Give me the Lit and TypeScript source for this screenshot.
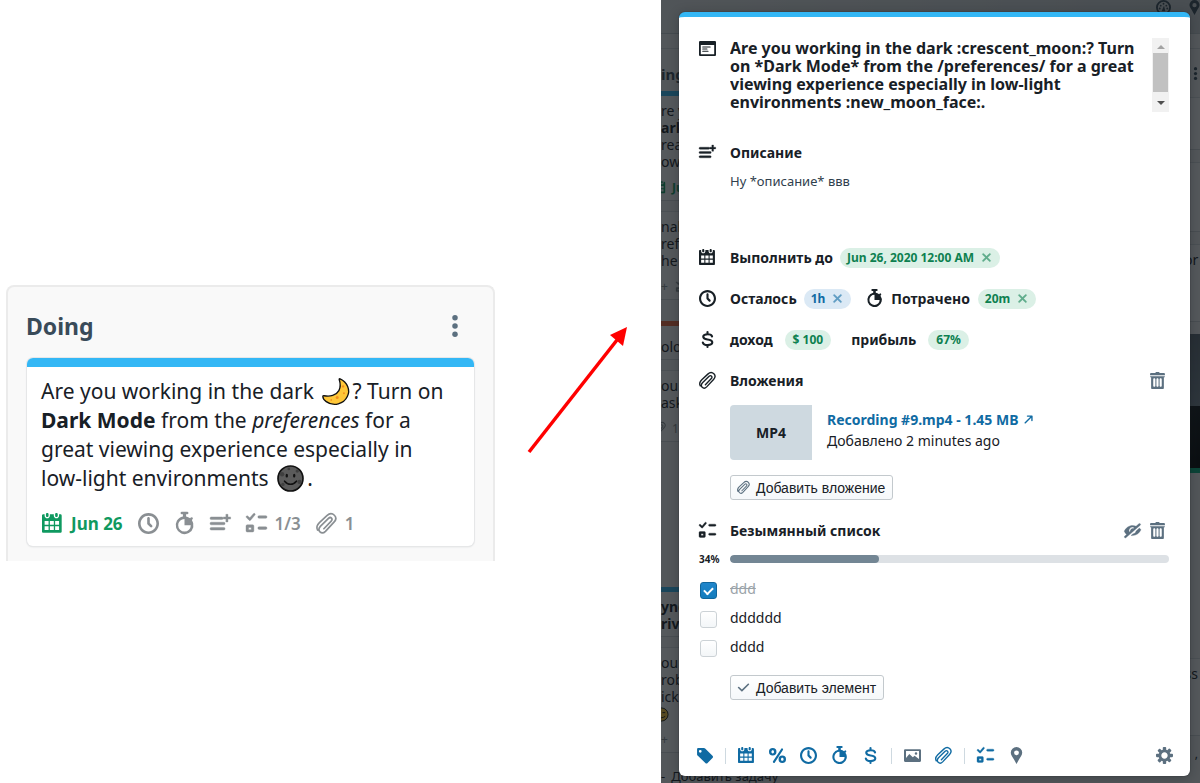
import { LitElement, html, css, svg, nothing } from "lit";
import { customElement, property } from "lit/decorators.js";
import { classMap } from "lit/directives/class-map.js";

const ICONS: Record<string, unknown> = {
  calendar: svg`<path d="M11 3c.6 0 1-.5 1-1V1c0-.6-.4-1-1-1s-1 .4-1 1v1c0 .5.4 1 1 1zm3-2h-1v1c0 1.1-.9 2-2 2s-2-.9-2-2V1H6v1c0 1.1-.9 2-2 2s-2-.9-2-2V1H1c-.6 0-1 .5-1 1v12c0 .6.4 1 1 1h13c.6 0 1-.4 1-1V2c0-.6-.5-1-1-1zM5 13H2v-3h3v3zm0-4H2V6h3v3zm4 4H6v-3h3v3zm0-4H6V6h3v3zm4 4h-3v-3h3v3zm0-4h-3V6h3v3zM4 3c.6 0 1-.5 1-1V1c0-.6-.4-1-1-1S3 .4 3 1v1c0 .5.4 1 1 1z"/>`,
  time: svg`<path d="M8 0C3.58 0 0 3.58 0 8s3.58 8 8 8 8-3.58 8-8-3.58-8-8-8zm0 14c-3.31 0-6-2.69-6-6s2.69-6 6-6 6 2.69 6 6-2.69 6-6 6zm1-6.41V4c0-.55-.45-1-1-1s-1 .45-1 1v4c0 .28.11.53.29.71l2 2a1.003 1.003 0 001.42-1.42L9 7.59z"/>`,
  stopwatch: svg`<path fill-rule="evenodd" d="M6 -1h4a1 1 0 0 1 0 2H9.2v1.6A6.8 6.8 0 0 1 12.3 4l.5-.5a.9.9 0 0 1 1.3 1.3l-.5.5A6.8 6.8 0 1 1 6.8 2.6V1H6a1 1 0 0 1 0-2zM8 4.5a4.8 4.8 0 1 0 4.8 4.8H8z"/>`,
  note: svg`<path d="M1 3h8a1 1 0 0 1 0 2H1a1 1 0 0 1 0-2zm0 4h9.5a1 1 0 0 1 0 2H1a1 1 0 0 1 0-2zm0 4h9.5a1 1 0 0 1 0 2H1a1 1 0 0 1 0-2zM12.1 1h1.6v2h2v1.600h-2v2.200h-1.600v-2.200h-2V3h2z" stroke="currentColor" stroke-width=".3"/>`,
  checklist: svg`<path fill-rule="evenodd" d="M10 2h5a1 1 0 0 1 0 2h-5a1 1 0 0 1 0-2zm0 8.500h5a1 1 0 0 1 0 2h-5a1 1 0 0 1 0-2zM5.600.500a.8.8 0 0 1 1.200 1.100L3.500 5.500a.8.8 0 0 1-1.200 0L.3 3.500a.8.8 0 0 1 1.200-1.100l1.400 1.300zM1 9h4a1 1 0 0 1 1 1v3.500a1 1 0 0 1-1 1H1a1 1 0 0 1-1-1V10a1 1 0 0 1 1-1zm1 2v1.700h2V11z" stroke="currentColor" stroke-width=".3"/>`,
  paperclip: svg`<path fill="none" stroke="currentColor" stroke-width="1.3" stroke-linecap="round" stroke-linejoin="round" d="M2.600 7.300 8.300 2C10.300.1 12.500.2 14 1.700s1.400 3.500-.3 5.300l-6.500 7c-1.300 1.300-3 1.500-4.200.4s-1-2.800.3-4.200L9.500 4.100c.8-.8 1.700-.8 2.300-.2s.6 1.500-.2 2.300L6 12M2.600 7.300C.6 9.300.2 11.300 1.200 13"/>`,
  application: svg`<path fill-rule="evenodd" d="M1 1h14a1 1 0 0 1 1 1v12a1 1 0 0 1-1 1H1a1 1 0 0 1-1-1V2a1 1 0 0 1 1-1zm.700 3.800v8.500h12.600V4.800zM3.500 6h7a.5.5 0 0 1 0 1h-7a.5.5 0 0 1 0-1zm0 2h4a.5.5 0 0 1 0 1h-4a.5.5 0 0 1 0-1zm0 2h5a.5.5 0 0 1 0 1h-5a.5.5 0 0 1 0-1z"/>`,
  cross: svg`<path d="M9.410 8l3.290-3.290c.19-.18.3-.43.3-.71a1.003 1.003 0 00-1.710-.71L8 6.590l-3.290-3.300a1.003 1.003 0 00-1.420 1.420L6.590 8 3.300 11.290c-.19.18-.3.43-.3.71a1.003 1.003 0 001.710.71L8 9.410l3.290 3.290c.18.19.43.3.71.3a1.003 1.003 0 00.71-1.710L9.410 8z" stroke="currentColor" stroke-width=".5"/>`,
  trash: svg`<path d="M14.490 3.990h-13c-.28 0-.5.22-.5.5s.22.5.5.5h.5v10c0 .55.45 1 1 1h10c.55 0 1-.45 1-1v-10h.5c.28 0 .5-.22.5-.5s-.22-.5-.5-.5zm-8.500 9c0 .55-.45 1-1 1s-1-.45-1-1v-6c0-.55.45-1 1-1s1 .45 1 1v6zm3 0c0 .55-.45 1-1 1s-1-.45-1-1v-6c0-.55.45-1 1-1s1 .45 1 1v6zm3 0c0 .55-.45 1-1 1s-1-.45-1-1v-6c0-.55.45-1 1-1s1 .45 1 1v6zm2-12h-4c0-.55-.45-1-1-1h-2c-.55 0-1 .45-1 1h-4c-.55 0-1 .45-1 1v1h14v-1c0-.55-.45-1-1-1z"/>`,
  eyeOff: svg`<path d="M.2 8.600C1.800 5.500 4.700 3.300 8 3.300c1.200 0 2.300.2 3.300.7L9.700 5.300A3.400 3.400 0 0 0 4.900 9.600l-2.300 2.200C1.600 11 .8 9.900.2 8.600zM6 8.700A2.100 2.100 0 0 1 8.600 6.300zM6.600 12.700l1.700-1.400A3.400 3.400 0 0 0 11.400 8.500L14.500 5.600c.6.500 1.100 1.100 1.500 1.800-1.700 3.300-4.500 5.400-8 5.400-.5 0-.9 0-1.400-.1zM.8 14.800a.9.9 0 0 1-.3-1.400L14 1.700a.9.9 0 0 1 1.300 1.300L2 14.700a.9.9 0 0 1-1.200.1z" stroke="currentColor" stroke-width=".3"/>`,
  tick: svg`<path d="M14 3c-.28 0-.53.11-.71.29L6 10.590l-3.290-3.300a1.003 1.003 0 00-1.420 1.420l4 4c.18.18.43.29.71.29s.53-.11.71-.29l8-8A1.003 1.003 0 0014 3z"/>`,
  arrow: svg`<path d="M13 2H6.500a1 1 0 0 0 0 2h4.100l-8.300 8.300a1 1 0 0 0 1.400 1.400L12 5.400v4.100a1 1 0 0 0 2 0V3a1 1 0 0 0-1-1z"/>`,
  tag: svg`<path fill-rule="evenodd" d="M2 1h5.500c.4 0 .8.2 1.100.5l6.900 6.800a1.500 1.500 0 0 1 0 2.100l-4.600 4.600a1.500 1.500 0 0 1-2.100 0L1.500 8.100A1.500 1.500 0 0 1 1 7V2a1 1 0 0 1 1-1zm2 1.800a1.300 1.300 0 1 0 0 2.600 1.300 1.300 0 0 0 0-2.600z"/>`,
  percent: svg`<path fill-rule="evenodd" d="M3.500 1A3.500 3.500 0 0 1 7 4.500 3.500 3.500 0 0 1 3.500 8 3.500 3.500 0 0 1 0 4.500 3.500 3.500 0 0 1 3.500 1zm0 2C2.700 3 2.300 3.600 2.300 4.500S2.700 6 3.500 6s1.200-.6 1.200-1.500S4.300 3 3.500 3zM12.500 8a3.500 3.500 0 1 1 0 7 3.500 3.500 0 0 1 0-7zm0 2c-.8 0-1.200.6-1.200 1.500s.4 1.500 1.200 1.500 1.200-.6 1.200-1.500-.4-1.500-1.200-1.500zM12.800 1.500a1 1 0 0 0-1.400.3L3.800 13.500a1 1 0 0 0 1.700 1.100L13.100 2.900a1 1 0 0 0-.3-1.400z"/>`,
  dollar: svg`<path fill="none" stroke="currentColor" stroke-width="2" stroke-linecap="round" d="M12.300 5.200C12 3.700 10.300 3 8.200 3 5.800 3 4 3.900 4 5.500S5.800 7.700 8 8s4.500.9 4.500 2.700S10.500 13.300 8.200 13.300 4 12.500 3.600 10.800M8 1v2M8 13.500V15"/>`,
  media: svg`<path fill-rule="evenodd" d="M1 2h14a1 1 0 0 1 1 1v10a1 1 0 0 1-1 1H1a1 1 0 0 1-1-1V3a1 1 0 0 1 1-1zm.900 1.800v6.500L5 6.500l3.300 3.200L10 8.300l4.100 3V3.800zM11.300 5a1.200 1.200 0 1 1 0 2.400 1.200 1.200 0 0 1 0-2.400z"/>`,
  marker: svg`<path fill-rule="evenodd" d="M8 0a5.400 5.400 0 0 1 5.400 5.400c0 2.400-2 4.200-3.200 6.600L8 16l-2.200-4C4.600 9.600 2.600 7.800 2.600 5.400A5.400 5.400 0 0 1 8 0zm0 3.200a2.300 2.300 0 1 0 0 4.600 2.300 2.300 0 0 0 0-4.600z"/>`,
  cog: svg`<path d="M15.190 6.390h-1.850c-.11-.37-.27-.71-.45-1.040l1.360-1.360c.31-.31.31-.82 0-1.130l-1.130-1.130a.803.803 0 00-1.130 0l-1.360 1.360c-.33-.17-.67-.33-1.040-.44V.79c0-.44-.36-.8-.8-.8h-1.600c-.44 0-.8.36-.8.8v1.860c-.39.12-.75.28-1.100.47l-1.300-1.300c-.3-.3-.79-.3-1.090 0L1.820 2.910c-.3.3-.3.79 0 1.090l1.300 1.300c-.2.34-.36.7-.48 1.090H.79c-.44 0-.8.36-.8.8v1.600c0 .44.36.8.8.8h1.850c.11.37.27.71.45 1.040l-1.360 1.360c-.31.31-.31.82 0 1.130l1.130 1.130c.31.31.82.31 1.130 0l1.360-1.360c.33.18.67.33 1.040.44v1.860c0 .44.36.8.8.8h1.600c.44 0 .8-.36.8-.8v-1.860c.39-.12.75-.28 1.100-.47l1.300 1.300c.3.3.79.3 1.090 0l1.090-1.090c.3-.3.3-.79 0-1.090l-1.300-1.300c.19-.35.36-.71.48-1.100h1.850c.44 0 .8-.36.8-.8v-1.600a.816.816 0 00-.81-.79zm-7.200 4.600c-1.660 0-3-1.340-3-3s1.340-3 3-3 3 1.340 3 3-1.340 3-3 3z"/>`,
  dots: svg`<circle cx="8" cy="2" r="2"/><circle cx="8" cy="8" r="2"/><circle cx="8" cy="14" r="2"/>`,
  gauge: svg`<circle cx="8" cy="8" r="7" fill="none" stroke="currentColor" stroke-width="2"/><circle cx="5" cy="6" r="1"/><circle cx="8" cy="4" r="1"/><circle cx="11" cy="6" r="1"/><circle cx="4" cy="9" r="1"/><circle cx="12" cy="9" r="1"/><path d="M8.500 6 10 12H6z"/>`,
  moon: svg`<path fill="#ffc738" stroke="#111" stroke-width="0.800" stroke-linejoin="round" d="M10.700.5C15 2.500 17 7 15 11c-2 4.300-8 6.200-12.500 3C1.300 13.200.500 12 .5 11c0-.4.200-.6.700-.5 3.500.8 7.300-.2 8.800-3 1.200-2.300.9-4.500.2-6.600-.1-.4.2-.5.5-.4z"/><g fill="#f19020"><circle cx="12.500" cy="5" r=".7"/><circle cx="9" cy="11.500" r=".9"/><circle cx="5.500" cy="13" r=".5"/><circle cx="13" cy="9" r=".6"/></g>`,
  newMoon: svg`<circle cx="8" cy="8" r="7.400" fill="#5b5b5b" stroke="#111" stroke-width="1"/><g fill="#3f3f3f"><circle cx="3" cy="5.500" r="1.300"/><circle cx="12" cy="3.600" r="1"/><circle cx="13.300" cy="10" r="1.200"/><circle cx="3.500" cy="11.500" r="1"/><circle cx="7" cy="2.300" r=".8"/></g><ellipse cx="5.800" cy="6.300" rx=".7" ry="1.100" fill="#111"/><ellipse cx="10.200" cy="6.300" rx=".7" ry="1.100" fill="#111"/><path d="M4.500 9.600c2 2.400 5 2.400 7 0" fill="none" stroke="#111" stroke-linecap="round"/>`,
  smile: svg`<circle cx="8" cy="8" r="7" fill="#ffc738" stroke="#111"/><path d="M4 10c2 2 5 2 8 0M3 6h3M9 6h3" fill="none" stroke="#111"/>`,
};

@customElement("ui-icon")
class UiIcon extends LitElement {
  @property() name = "tick";
  static styles = css`
    :host { display: inline-flex; width: 17px; height: 17px; flex: none; }
    svg { width: 100%; height: 100%; fill: currentColor; overflow: visible; }
  `;
  render() {
    return html`<svg viewBox="0 0 16 16" aria-hidden="true">${ICONS[this.name]}</svg>`;
  }
}

@customElement("task-column")
class TaskColumn extends LitElement {
  static styles = css`
    :host { display: block; background: #f9f9f9; border: 2px solid #ebebeb; border-bottom: 0; border-radius: 8px 8px 0 0; padding: 23px 18px 15px; color: #182026; }
    .head { display: flex; justify-content: space-between; align-items: center; height: 32px; margin-bottom: 16px; padding-right: 9px; color: #394b59; }
    h2 { margin: 0; font-size: 23px; line-height: 32px; font-weight: 700; }
    button { border: 0; background: none; padding: 0; color: #5c7080; display: flex; }
    .more { width: 22px; height: 22px; }
    .card { background: #fff; border-radius: 6px; box-shadow: 0 0 0 1px #e6e7e8, 0 1px 2px #d9dbdc; overflow: hidden; margin: 0 1px; }
    .accent { height: 9px; background: #34b7f5; }
    .body { padding: 10px 0 12px 14px; }
    p { margin: 0; font-size: 21px; line-height: 29px; white-space: nowrap; }
    .emoji { width: 27px; height: 27px; vertical-align: -6px; margin: -6px 3px; }
    .meta { display: flex; gap: 15px; margin: 19px 0 0 1px; align-items: center; height: 22px; color: #8a8f93; font-size: 17px; font-weight: 600; }
    .item { display: flex; align-items: center; gap: 8px; }
    .item ui-icon { width: 21px; height: 21px; }
    .due { color: #0f9960; font-weight: 700; }
  `;
  render() {
    return html`
      <div class="head"><h2>Doing</h2><button aria-label="Menu"><ui-icon class="more" name="dots"></ui-icon></button></div>
      <article class="card">
        <div class="accent"></div>
        <div class="body">
          <p>Are you working in the dark <ui-icon class="emoji" name="moon"></ui-icon>? Turn on<br /><b>Dark Mode</b> from the <i>preferences</i> for a<br />great viewing experience especially in<br />low-light environments <ui-icon class="emoji" name="newMoon"></ui-icon>.</p>
          <div class="meta">
            <span class="item due"><ui-icon name="calendar"></ui-icon>Jun 26</span>
            <span class="item"><ui-icon name="time"></ui-icon></span>
            <span class="item"><ui-icon name="stopwatch"></ui-icon></span>
            <span class="item"><ui-icon name="note"></ui-icon></span>
            <span class="item"><ui-icon name="checklist"></ui-icon>1/3</span>
            <span class="item"><ui-icon name="paperclip"></ui-icon>1</span>
          </div>
        </div>
      </article>`;
  }
}

@customElement("board-backdrop")
class BoardBackdrop extends LitElement {
  static styles = css`
    :host { display: flex; flex-direction: column; overflow: hidden; background: #f0f1f2; color: #182026; font-size: 14px; line-height: 17px; white-space: nowrap; }
    .top { height: 33px; flex: none; border-bottom: 1px solid #c4c9cc; display: flex; justify-content: flex-end; gap: 16px; background: linear-gradient(90deg, #e8e9ea, #cfd3d6); color: #394b59; }
    .top ui-icon { width: 15px; height: 15px; }
    .top ui-icon:last-child { margin-right: -2px; }
    .cols { display: flex; justify-content: space-between; flex: 1; }
    .col { width: 60%; margin-top: 14px; border-top: 1px solid #d4d8da; }
    .right { width: 16px; }
    h3 { margin: 0; height: 42px; line-height: 50px; font-size: 15px; color: #394b59; }
    .card { background: #f8f8f8; border-top: 1px solid #d8dbdd; border-bottom: 1px solid #d0d3d5; margin-bottom: 10px; padding: 6px 0 4px; }
    .right .card { box-sizing: border-box; margin-bottom: 12px; padding-right: 2px; text-align: right; }
    .hot { border-top: 5px solid #34b7f5; }
    .warn { border-top: 5px solid #f0643a; margin-top: 21px; padding-top: 12px; }
    .later { margin-top: 145px; }
    .meta { margin-top: 8px; height: 18px; display: flex; gap: 6px; align-items: center; color: #8a8f93; font-size: 12px; }
    .meta ui-icon { width: 13px; height: 13px; margin-left: -8px; }
    .plus { gap: 8px; }
    .plus ui-icon { margin-left: 0; }
    .due { color: #0f9960; font-weight: 700; }
    .emoji { width: 15px; height: 15px; margin-left: -7px; vertical-align: -3px; }
    .add { display: flex; gap: 6px; line-height: 14px; padding-top: 6px; font-size: 13px; }
    .more { height: 48px; padding-top: 17px; box-sizing: border-box; margin-left: 5px; color: #394b59; }
    .more ui-icon { width: 13px; height: 13px; }
    .short { height: 53px; }
    .medium { height: 70px; }
    .tall { height: 78px; }
    .photo { height: 134px; background: linear-gradient(#5f6a75, #76838e 54%, #101214 54%, #000); border-bottom: 5px solid #00b37e; margin-bottom: 185px; }
    .foot { line-height: 12px; font-size: 12px; margin: 3px 2px 0 -228px; display: flex; flex-direction: column; }
    .end { align-self: flex-end; }
  `;
  render() {
    return html`
      <div class="top"><ui-icon name="gauge"></ui-icon><ui-icon name="marker"></ui-icon></div>
      <div class="cols">
        <div class="col">
          <h3>ing</h3>
          <div class="card hot">re you<br /><b>ark Mode</b><br />reat<br />ow-light<div class="meta due"><ui-icon name="calendar"></ui-icon>Jun</div></div>
          <div class="card">nable<br />refe<br />he oth<div class="meta plus">+<ui-icon name="checklist"></ui-icon></div></div>
          <div class="card warn">olors</div>
          <div class="card">ou can<br />asks<div class="meta"><ui-icon name="paperclip"></ui-icon>1</div></div>
          <div class="card hot later"><b>ync</b><br /><b>rive</b></div>
          <div class="card">ou mi<br />roble<br />ick<br /><ui-icon class="emoji" name="smile"></ui-icon><div class="meta">+</div></div>
          <div class="add"><span>-</span><span>Добавить задачу</span></div>
        </div>
        <div class="col right">
          <div class="more"><ui-icon name="dots"></ui-icon></div>
          <div class="card short"></div>
          <div class="card medium"></div>
          <div class="card tall">or</div>
          <div class="photo"></div>
          <div class="card tall">ss</div>
          <div class="foot"><span class="end">,</span><span>10, 20, 30 and 60 <b>minutes</b></span></div>
        </div>
      </div>`;
  }
}

@customElement("task-dialog")
class TaskDialog extends LitElement {
  static styles = css`
    :host { display: flex; flex-direction: column; box-sizing: border-box; background: #fff; border-top: 5px solid #34b7f5; border-radius: 6px; padding: 21px 21px 0 20px; color: #182026; font-size: 14px; line-height: 20px; box-shadow: 0 0 0 1px rgba(16, 22, 26, 0.1), 0 2px 12px rgba(16, 22, 26, 0.3); }
    textarea { display: block; flex: 1; min-width: 0; border: 0; padding: 0; margin: 0; resize: none; overflow: hidden; background: none; font: inherit; color: inherit; outline: none; }
    button { font: inherit; border: 0; background: none; padding: 0; color: inherit; display: inline-flex; align-items: center; }
    .row { display: flex; align-items: center; height: 41px; }
    .lead { width: 31px; flex: none; display: flex; align-items: center; }
    h3, .name { margin: 0; font-size: 14px; line-height: 20px; font-weight: 700; }
    .title { display: flex; margin-bottom: 19px; }
    .title .lead { height: 20px; }
    .title textarea { font-size: 16px; line-height: 18px; font-weight: 700; height: 75px; padding-top: 1px; box-sizing: border-box; white-space: pre; }
    .bar { width: 17px; height: 74px; background: #f1f1f1; display: flex; flex-direction: column; align-items: center; justify-content: space-between; }
    .bar::before, .bar::after { content: ""; border: 4px solid transparent; }
    .bar::before { border-bottom-color: #a3a3a3; border-top: 0; margin-top: 7px; }
    .bar::after { border-top-color: #505050; border-bottom: 0; margin-bottom: 7px; }
    .thumb { width: 15px; height: 39px; background: #c1c1c1; margin-bottom: 5px; }
    .indent { margin-left: 31px; }
    .desc { display: flex; height: 64px; }
    .desc textarea { line-height: 16px; font-size: 13px; color: #30404d; }
    .pill { display: inline-flex; align-items: center; height: 20px; border-radius: 20px; padding: 0 7px; margin-left: 7px; gap: 6px; font-size: 12px; font-weight: 700; background: #dbf0e6; color: #0d8050; }
    .pill ui-icon { width: 13px; height: 13px; opacity: 0.6; }
    .blue { background: #dbe9f5; color: #106ba3; }
    .next { display: flex; align-items: center; margin-left: 15px; gap: 8px; }
    .next .pill { margin-left: 0; }
    .plain { margin-left: 20px; gap: 12px; }
    .money { padding: 0 8px; }
    .wide { margin-left: 12px; }
    .grow { flex: 1; }
    .tools { display: flex; gap: 8px; padding-right: 3px; color: #5c7080; }
    .file { display: flex; margin-top: 4px; height: 55px; gap: 15px; }
    .type { width: 82px; background: #ced9e0; border-radius: 4px 0 0 4px; display: flex; align-items: center; justify-content: center; font-weight: 700; }
    .info { display: flex; flex-direction: column; padding-top: 4px; line-height: 21px; }
    a { color: #106ba3; font-weight: 700; text-decoration: none; display: flex; align-items: center; gap: 5px; }
    a ui-icon { width: 11px; height: 11px; }
    .add { align-self: flex-start; box-sizing: border-box; height: 25px; border-radius: 3px; border: 1px solid #c3c9cd; background: linear-gradient(#fff, #f5f8fa); padding: 0 7px 0 6px; gap: 6px; font-family: "Liberation Sans", Arial, sans-serif; font-size: 14px; margin-top: 15px; }
    .add ui-icon { width: 13px; height: 13px; color: #5c7080; }
    .list { height: 31px; margin-top: 15px; }
    .meter { display: flex; align-items: center; height: 26px; margin-bottom: 4px; }
    .meter .lead { font-size: 10px; font-weight: 700; }
    .track { flex: 1; height: 8px; border-radius: 8px; background: #dde1e5; overflow: hidden; }
    .fill { height: 100%; border-radius: 8px; background: #738694; }
    .check { display: flex; align-items: center; height: 29px; }
    input { appearance: none; margin: 0 13px 0 1px; box-sizing: border-box; width: 17px; height: 17px; border-radius: 3px; border: 1px solid #ccd2d6; background: linear-gradient(#fff, #f3f6f8); display: grid; place-items: center; }
    input:checked { background: linear-gradient(#2086cb, #137cbd); border-color: #10669c; }
    input:checked::after { content: ""; border: solid #fff; border-width: 0 0 2px 2px; box-sizing: border-box; width: 9px; height: 6px; transform: translateY(-1px) rotate(-45deg); }
    .check span { padding-bottom: 4px; }
    .done { color: #9aa3a9; text-decoration: line-through; }
    .last { margin-top: 12px; }
    .bottom { display: flex; align-items: center; margin: auto -5px 0 -3px; height: 41px; gap: 14px; color: #106ba3; padding-right: 1px; }
    .sep { width: 1px; height: 16px; background: #ced9e0; margin: 0 -2px; }
    .gray { color: #5c7080; }
  `;
  tool(name: string, label: string, gray = false) {
    return html`<button aria-label=${label} class=${classMap({ gray })}><ui-icon name=${name}></ui-icon></button>`;
  }
  render() {
    const items = [
      { text: "ddd", done: true },
      { text: "dddddd", done: false },
      { text: "dddd", done: false },
    ];
    const progress = 34;
    return html`
      <div class="title">
        <span class="lead"><ui-icon name="application"></ui-icon></span>
        <textarea aria-label="Title" .value=${"Are you working in the dark :crescent_moon:? Turn\non *Dark Mode* from the /preferences/ for a great\nviewing experience especially in low-light\nenvironments :new_moon_face:."}></textarea>
        <div class="bar"><div class="thumb"></div></div>
      </div>
      <div class="row"><span class="lead"><ui-icon name="note"></ui-icon></span><h3 id="desc">Описание</h3></div>
      <div class="desc indent"><textarea aria-labelledby="desc" .value=${"Ну *описание* ввв"}></textarea></div>
      <div class="row">
        <span class="lead"><ui-icon name="calendar"></ui-icon></span><span class="name">Выполнить до</span>
        <span class="pill">Jun 26, 2020 12:00 AM<button aria-label="Clear"><ui-icon name="cross"></ui-icon></button></span>
      </div>
      <div class="row">
        <span class="lead"><ui-icon name="time"></ui-icon></span><span class="name">Осталось</span>
        <span class="pill blue">1h<button aria-label="Clear"><ui-icon name="cross"></ui-icon></button></span>
        <span class="next"><ui-icon name="stopwatch"></ui-icon><span class="name">Потрачено</span><span class="pill">20m<button aria-label="Clear"><ui-icon name="cross"></ui-icon></button></span></span>
      </div>
      <div class="row">
        <span class="lead"><ui-icon name="dollar"></ui-icon></span><span class="name">доход</span><span class="pill money wide">$ 100</span>
        <span class="next plain"><span class="name">прибыль</span><span class="pill money">67%</span></span>
      </div>
      <div class="row">
        <span class="lead"><ui-icon name="paperclip"></ui-icon></span><h3 class="grow">Вложения</h3>
        <span class="tools">${this.tool("trash", "Delete", true)}</span>
      </div>
      <div class="file indent">
        <span class="type">MP4</span>
        <span class="info"><a href="#file">Recording #9.mp4 - 1.45 MB<ui-icon name="arrow"></ui-icon></a><span>Добавлено 2 minutes ago</span></span>
      </div>
      <button class="add indent"><ui-icon name="paperclip"></ui-icon>Добавить вложение</button>
      <div class="row list">
        <span class="lead"><ui-icon name="checklist"></ui-icon></span><h3 class="grow">Безымянный список</h3>
        <span class="tools">${this.tool("eyeOff", "Hide", true)}${this.tool("trash", "Delete", true)}</span>
      </div>
      <div class="meter"><span class="lead">${progress}%</span><div class="track"><div class="fill" style="width:${progress}%"></div></div></div>
      ${items.map((i) => html`<label class="check"><input type="checkbox" .checked=${i.done} /><span class=${i.done ? "done" : nothing}>${i.text}</span></label>`)}
      <button class="add indent last"><ui-icon name="tick"></ui-icon>Добавить элемент</button>
      <div class="bottom">
        ${this.tool("tag", "Tag")}<span class="sep"></span>
        ${this.tool("calendar", "Due date")}${this.tool("percent", "Percent")}${this.tool("time", "Time left")}${this.tool("stopwatch", "Time spent")}${this.tool("dollar", "Income")}<span class="sep"></span>
        ${this.tool("media", "Image", true)}${this.tool("paperclip", "Attachment")}<span class="sep"></span>
        ${this.tool("checklist", "Checklist")}${this.tool("marker", "Place", true)}
        <span class="grow"></span>${this.tool("cog", "Settings", true)}
      </div>`;
  }
}

@customElement("app-root")
class AppRoot extends LitElement {
  static styles = css`
    :host { display: grid; grid-template-columns: 661fr 539fr; min-height: 100vh; background: #fff; font-family: "Noto Sans", "Open Sans", sans-serif; }
    .source { display: flex; align-items: flex-start; padding: 285px 0 0 6px; }
    task-column { flex: 0 1 449px; box-sizing: content-box; }
    .pointer { width: 100px; height: 128px; margin: 41px 0 0 33px; flex: none; overflow: visible; }
    .app { position: relative; overflow: hidden; display: grid; }
    board-backdrop { position: absolute; inset: 0; }
    .shade { position: absolute; inset: 0; background: rgba(16, 22, 26, 0.7); }
    task-dialog { position: relative; margin: 12px 10px 7px 18px; }
  `;
  render() {
    return html`
      <section class="source">
        <task-column></task-column>
        <svg class="pointer" viewBox="0 0 100 128" aria-hidden="true"><path d="M1 126 89 14" stroke="#f00" stroke-width="3.500" /><path d="M99 1 82 9 95 20z" fill="#f00" /></svg>
      </section>
      <section class="app">
        <board-backdrop></board-backdrop>
        <div class="shade"></div>
        <task-dialog></task-dialog>
      </section>`;
  }
}
